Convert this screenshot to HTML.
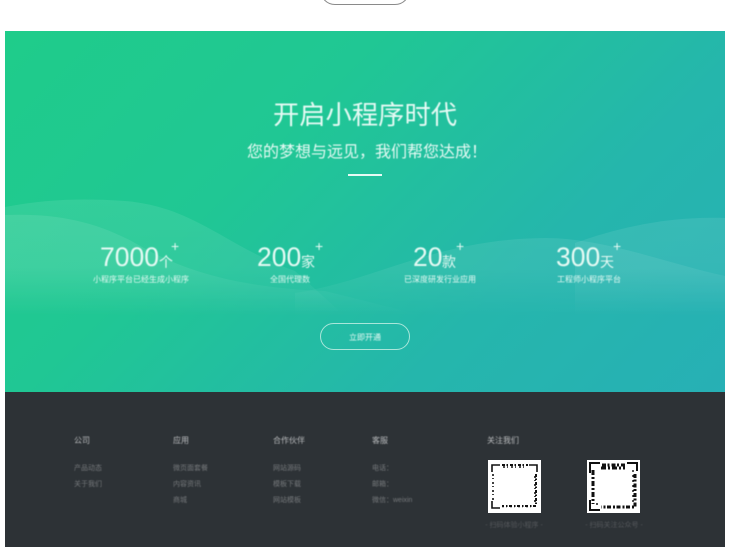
<!DOCTYPE html>
<html lang="zh">
<head>
<meta charset="utf-8">
<title>开启小程序时代</title>
<style>
html,body{margin:0;padding:0;background:#fff}
body{width:743px;height:547px;position:relative;overflow:hidden;font-family:"Liberation Sans","Noto Sans CJK SC",sans-serif}
.a{position:absolute;white-space:nowrap;line-height:1}
.c{transform:translateX(-50%)}
#top{position:absolute;left:320px;top:-25px;width:88px;height:28px;border:1px solid #8a8a8a;border-radius:15px}
#hero{position:absolute;left:5px;top:31px;width:720px;height:361px;background:linear-gradient(135deg,#1fcc8a 0%,#20c794 35%,#25b6ac 70%,#27b0b5 100%);overflow:hidden}
#hero svg{position:absolute;left:0;top:0}
.t{color:#e6faf4;filter:blur(.4px)}
#foot{position:absolute;left:5px;top:392px;width:720px;height:155px;background:#2d3236}
.h{font-size:8px;color:#b9bbbd;filter:blur(.4px)}
.l{font-size:7px;color:#75787b;filter:blur(.4px)}
.cap{font-size:7px;color:#55585c;filter:blur(.4px)}
.qr{position:absolute;top:68px;width:53px;height:53px;background:#fff;filter:blur(.3px)}
</style>
</head>
<body>
<div id="top"></div>

<div id="hero">
<svg width="720" height="361" viewBox="0 0 720 361">
<defs>
<linearGradient id="w" x1="0" y1="165" x2="0" y2="285" gradientUnits="userSpaceOnUse">
<stop offset="0" stop-color="#fff" stop-opacity=".09"/>
<stop offset=".6" stop-color="#fff" stop-opacity=".07"/>
<stop offset="1" stop-color="#fff" stop-opacity="0"/>
</linearGradient>
</defs>
<path fill="url(#w)" d="M0 176C40 168 80 167 120 170C190 176 220 215 290 240L340 285H0Z"/>
<path fill="url(#w)" d="M0 184C50 182 90 190 130 212C170 235 220 256 320 260L420 285H0Z"/>
<path fill="url(#w)" d="M290 262C370 250 430 208 540 207C600 207 660 232 720 245V285H290Z"/>
<path fill="url(#w)" d="M570 212C610 198 660 185 720 187V285H570Z"/>
</svg>

<div class="a t c" style="left:360px;top:71px;font-size:26.3px">开启小程序时代</div>
<div class="a t c" style="left:362px;top:114px;font-size:16px">您的梦想与远见，我们帮您达成！</div>
<div class="a" style="left:343px;top:143px;width:34px;height:2px;background:#e6faf4"></div>

<div class="a t" style="left:95px;top:213px;font-size:26.5px">7000</div>
<div class="a t" style="left:154px;top:224px;font-size:14px">个</div>
<div class="a t" style="left:166px;top:208px;font-size:14px">+</div>
<div class="a t c" style="left:136px;top:245px;font-size:8px">小程序平台已经生成小程序</div>

<div class="a t" style="left:252px;top:213px;font-size:26.5px">200</div>
<div class="a t" style="left:296px;top:224px;font-size:14px">家</div>
<div class="a t" style="left:310px;top:208px;font-size:14px">+</div>
<div class="a t c" style="left:285px;top:245px;font-size:8px">全国代理数</div>

<div class="a t" style="left:408px;top:213px;font-size:26.5px">20</div>
<div class="a t" style="left:437px;top:224px;font-size:14px">款</div>
<div class="a t" style="left:451px;top:208px;font-size:14px">+</div>
<div class="a t c" style="left:435px;top:245px;font-size:8px">已深度研发行业应用</div>

<div class="a t" style="left:551px;top:213px;font-size:26.5px">300</div>
<div class="a t" style="left:595px;top:224px;font-size:14px">天</div>
<div class="a t" style="left:608px;top:208px;font-size:14px">+</div>
<div class="a t c" style="left:584px;top:245px;font-size:8px">工程师小程序平台</div>

<div class="a" style="left:315px;top:292px;width:88px;height:25px;border:1px solid #a9e6da;border-radius:14px"></div>
<div class="a t c" style="left:360px;top:303px;font-size:8px">立即开通</div>
</div>

<div id="foot">
<div class="a h" style="left:69px;top:45px">公司</div>
<div class="a l" style="left:69px;top:73px">产品动态</div>
<div class="a l" style="left:69px;top:89px">关于我们</div>

<div class="a h" style="left:168px;top:45px">应用</div>
<div class="a l" style="left:168px;top:73px">微页面套餐</div>
<div class="a l" style="left:168px;top:89px">内容资讯</div>
<div class="a l" style="left:168px;top:105px">商城</div>

<div class="a h" style="left:268px;top:45px">合作伙伴</div>
<div class="a l" style="left:268px;top:73px">网站源码</div>
<div class="a l" style="left:268px;top:89px">模板下载</div>
<div class="a l" style="left:268px;top:105px">网站模板</div>

<div class="a h" style="left:367px;top:45px">客服</div>
<div class="a l" style="left:367px;top:73px">电话：</div>
<div class="a l" style="left:367px;top:89px">邮箱：</div>
<div class="a l" style="left:367px;top:105px">微信：weixin</div>

<div class="a h" style="left:482px;top:45px">关注我们</div>

<div class="qr" style="left:483px">
<svg width="53" height="53" viewBox="0 0 53 53">
<path fill="none" stroke="#111" stroke-width="1.6" d="M4 12V5H12M41 5H49V12M4 41V48H12"/>
<path fill="none" stroke="#111" stroke-width="2" stroke-dasharray="3 1.5 1.5 2" d="M14 5H40M48 14V46H14"/>
<path fill="none" stroke="#111" stroke-width="1.6" stroke-dasharray="2 2 1 3" d="M5 14V40M15 7H39M47 16V44M14 46.5H44"/>
</svg>
</div>
<div class="a cap c" style="left:509px;top:130px">- 扫码体验小程序 -</div>

<div class="qr" style="left:582px">
<svg width="53" height="53" viewBox="0 0 53 53">
<path fill="none" stroke="#111" stroke-width="2" d="M3 13V3H13M40 3H50V11M3 40V50H13"/>
<path fill="none" stroke="#111" stroke-width="3" stroke-dasharray="4 1.5 2 2" d="M15 5H39M48 14V47H14"/>
<path fill="none" stroke="#111" stroke-width="3" stroke-dasharray="5 2 2 2" d="M6 10V44M14 8H38"/>
<path fill="none" stroke="#111" stroke-width="1.4" stroke-dasharray="2 3" d="M9 44H14M46 10V44"/>
</svg>
</div>
<div class="a cap c" style="left:609px;top:130px">- 扫码关注公众号 -</div>
</div>
</body>
</html>
